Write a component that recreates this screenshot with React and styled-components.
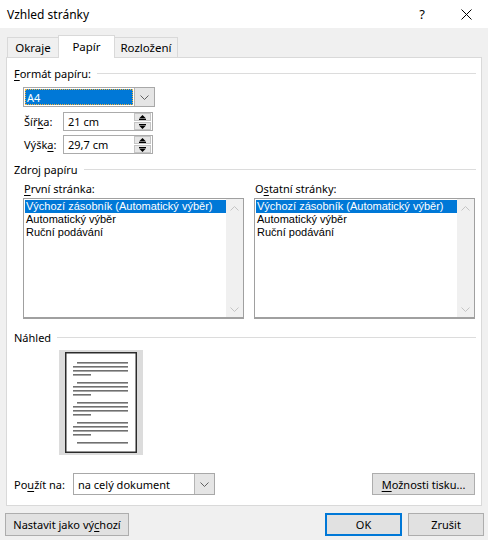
import React from 'react'
import styled, { createGlobalStyle } from 'styled-components'

const GlobalStyle = createGlobalStyle`
    html, body {
        margin: 0;
        padding: 0;
        background: #f0f0f0;
    }
    body {
        font-family: "Noto Sans", "Liberation Sans", sans-serif;
        font-size: 11px;
        line-height: 15px;
        color: #000;
    }
`

const Window = styled.div`
    width: 488px;
    height: 540px;
    background: #f0f0f0;
    display: flex;
    flex-direction: column;
    overflow: hidden;
`

const TitleBar = styled.div`
    height: 28px;
    flex-shrink: 0;
    background: #fff;
    display: flex;
    align-items: center;
    padding-left: 7px;
    font-size: 12px;
`

const Title = styled.div`
    flex: 1;
`

const TitleButton = styled.div`
    width: 44px;
    height: 28px;
    display: flex;
    align-items: center;
    justify-content: center;
    font-size: 13px;
`

const Body = styled.div`
    padding: 7px 6px 0 6px;
`

const TabStrip = styled.div`
    display: flex;
    align-items: flex-end;
    height: 22px;
    padding-left: 1px;
    position: relative;
    z-index: 1;
`

const Tab = styled.div`
    width: ${p => p.$w}px;
    height: ${p => (p.$active ? 23 : 20)}px;
    margin-bottom: ${p => (p.$active ? -1 : 0)}px;
    margin-right: -1px;
    box-sizing: border-box;
    border: 1px solid #d9d9d9;
    border-bottom: none;
    background: ${p => (p.$active ? '#fff' : '#f0f0f0')};
    display: flex;
    align-items: center;
    justify-content: center;
    padding-bottom: ${p => (p.$active ? 2 : 0)}px;
    font-size: 11.5px;
`

const Panel = styled.div`
    height: 449px;
    box-sizing: border-box;
    background: #fff;
    border: 1px solid #d9d9d9;
    padding: 8px 5px 0 7px;
    display: flex;
    flex-direction: column;
`

const GroupTitle = styled.div`
    display: flex;
    align-items: center;
    gap: 6px;
    height: 15px;
    margin-top: ${p => p.$mt || 0}px;

    &::after {
        content: "";
        flex: 1;
        height: 1px;
        background: #dcdcdc;
    }
`

const U = styled.span`
    text-decoration: underline;
    text-underline-offset: 2px;
`

const Indent = styled.div`
    padding-left: 9px;
    display: flex;
    flex-direction: column;
`

const Combo = styled.div`
    display: flex;
    width: ${p => p.$w}px;
    height: ${p => p.$h}px;
    box-sizing: border-box;
    border: 1px solid #a8a8a8;
    background: #fff;
    margin-top: ${p => p.$mt || 0}px;
`

const ComboValue = styled.div`
    flex: 1;
    display: flex;
    align-items: center;
    padding-left: 4px;
`

const ComboSelected = styled.div`
    flex: 1;
    margin: 1px;
    padding-left: 1px;
    display: flex;
    align-items: center;
    background: #0078d7;
    color: #fff;
    border: 1px dotted #f2b33d;
`

const ComboButton = styled.div`
    width: 19px;
    background: #e5e5e5;
    border-left: 1px solid #b4b4b4;
    display: flex;
    align-items: center;
    justify-content: center;
`

const SizeRow = styled.div`
    display: flex;
    align-items: center;
    margin-top: ${p => p.$mt}px;
    padding-left: 1px;
`

const SizeLabel = styled.div`
    width: 39px;
`

const Spin = styled.div`
    width: 90px;
    height: 19px;
    box-sizing: border-box;
    border: 1px solid #ababab;
    display: flex;
    align-items: center;
    padding-left: 4px;
`

const SpinValue = styled.div`
    flex: 1;
`

const SpinButtons = styled.div`
    display: flex;
    flex-direction: column;
    gap: 1px;
    margin-right: 1px;
`

const SpinButton = styled.div`
    width: 15px;
    height: 6px;
    background: #e6e6e6;
    border: 1px solid #c4c4c4;
    box-sizing: content-box;
    display: flex;
    align-items: center;
    justify-content: center;
`

const Columns = styled.div`
    display: grid;
    grid-template-columns: 221px 221px;
    column-gap: 10px;
    padding-left: 9px;
    margin-top: 4px;
`

const Column = styled.div`
    display: flex;
    flex-direction: column;
`

const ColumnLabel = styled.div`
    height: 15px;
    padding-left: 1px;
`

const ListBox = styled.div`
    margin-top: 2px;
    height: 121px;
    box-sizing: border-box;
    border: 1px solid #a0a0a0;
    border-bottom-width: 2px;
    display: flex;
`

const ListItems = styled.div`
    flex: 1;
    padding: 1px 0 0 1px;
`

const ListItem = styled.div`
    font-family: "Liberation Sans", Arial, sans-serif;
    font-size: 11px;
    line-height: 13px;
    height: 13px;
    padding-left: 1px;
    white-space: nowrap;
    background: ${p => (p.$selected ? '#0078d7' : 'transparent')};
    color: ${p => (p.$selected ? '#fff' : '#000')};
`

const ScrollTrack = styled.div`
    width: 17px;
    background: #f0f0f0;
    display: flex;
    flex-direction: column;
    justify-content: space-between;
    align-items: center;
    padding: 7px 0 5px;
`

const Preview = styled.div`
    margin: 5px 0 0 45px;
    width: 84px;
    height: 105px;
    background: #dcdcdc;
    padding: 2px 0 0 6px;
    box-sizing: border-box;
`

const ApplyRow = styled.div`
    display: flex;
    align-items: center;
    margin-top: 18px;
    padding-right: 1px;
`

const ApplyLabel = styled.div`
    width: 59px;
`

const Button = styled.div`
    height: ${p => p.$h || 23}px;
    width: ${p => p.$w}px;
    box-sizing: border-box;
    background: #e1e1e1;
    border: ${p => (p.$primary ? '2px solid #0078d7' : '1px solid #adadad')};
    display: flex;
    align-items: center;
    justify-content: center;
    margin-left: ${p => (p.$push ? 'auto' : '0')};
`

const Footer = styled.div`
    display: flex;
    gap: 6px;
    padding: 7px 4px 0 5px;
`

const Chevron = ({ color = '#606060' }) => (
    <svg width="9" height="5" viewBox="0 0 9 5">
        <path d="M0.5 0.5 L4.5 4.5 L8.5 0.5" stroke={color} fill="none" />
    </svg>
)

const ChevronUp = () => (
    <svg width="9" height="5" viewBox="0 0 9 5">
        <path d="M0.5 4.5 L4.5 0.5 L8.5 4.5" stroke="#c4c4c4" fill="none" />
    </svg>
)

const Triangle = ({ up }) => (
    <svg width="7" height="5" viewBox="0 0 7 5">
        {up ? (
            <>
                <path d="M3.5 0 L7 3.5 L0 3.5 Z" fill="#000" />
                <rect x="0" y="4" width="7" height="1" fill="#000" />
            </>
        ) : (
            <>
                <rect x="0" y="0" width="7" height="1" fill="#000" />
                <path d="M0 1.5 L7 1.5 L3.5 5 Z" fill="#000" />
            </>
        )}
    </svg>
)

const Close = () => (
    <svg width="11" height="11" viewBox="0 0 11 11">
        <path d="M0.5 0.5 L10.5 10.5 M10.5 0.5 L0.5 10.5" stroke="#000" strokeWidth="1" />
    </svg>
)

// page thumbnail: four paragraphs of four lines and one trailing line
const PageThumb = () => {
    const lines = []
    for (let g = 0; g < 4; g++) {
        const y = 10 + g * 20
        lines.push(<rect key={g + 'a'} x="12" y={y} width="51" height="1.6" />)
        lines.push(<rect key={g + 'b'} x="8" y={y + 4} width="55" height="1.6" />)
        lines.push(<rect key={g + 'c'} x="8" y={y + 8} width="55" height="1.6" />)
        lines.push(<rect key={g + 'd'} x="8" y={y + 12} width="18" height="1.6" />)
    }
    lines.push(<rect key="last" x="12" y="90" width="51" height="1.6" />)
    return (
        <svg width="72" height="101" viewBox="0 0 72 101">
            <rect x="0.75" y="0.75" width="70.5" height="99.5" fill="#fff" stroke="#2b2b2b" strokeWidth="1.5" />
            <g fill="#707070">{lines}</g>
        </svg>
    )
}

const sources = ['Výchozí zásobník (Automatický výběr)', 'Automatický výběr', 'Ruční podávání']

const SourceList = () => (
    <ListBox>
        <ListItems>
            {sources.map((s, i) => (
                <ListItem key={s} $selected={i === 0}>{s}</ListItem>
            ))}
        </ListItems>
        <ScrollTrack>
            <ChevronUp />
            <Chevron color="#c4c4c4" />
        </ScrollTrack>
    </ListBox>
)

const App = () => {
    return (
        <Window>
            <GlobalStyle />
            <TitleBar>
                <Title>Vzhled stránky</Title>
                <TitleButton>?</TitleButton>
                <TitleButton><Close /></TitleButton>
            </TitleBar>
            <Body>
                <TabStrip>
                    <Tab $w={52}>Okraje</Tab>
                    <Tab $w={57} $active>Papír</Tab>
                    <Tab $w={64}>Rozložení</Tab>
                </TabStrip>
                <Panel>
                    <GroupTitle><span><U>F</U>ormát papíru:</span></GroupTitle>
                    <Indent>
                        <Combo $w={132} $h={20} $mt={6}>
                            <ComboSelected>A4</ComboSelected>
                            <ComboButton><Chevron /></ComboButton>
                        </Combo>
                        <SizeRow $mt={5}>
                            <SizeLabel>Šíř<U>k</U>a:</SizeLabel>
                            <Spin>
                                <SpinValue>21 cm</SpinValue>
                                <SpinButtons>
                                    <SpinButton><Triangle up /></SpinButton>
                                    <SpinButton><Triangle /></SpinButton>
                                </SpinButtons>
                            </Spin>
                        </SizeRow>
                        <SizeRow $mt={4}>
                            <SizeLabel>Výšk<U>a</U>:</SizeLabel>
                            <Spin>
                                <SpinValue>29,7 cm</SpinValue>
                                <SpinButtons>
                                    <SpinButton><Triangle up /></SpinButton>
                                    <SpinButton><Triangle /></SpinButton>
                                </SpinButtons>
                            </Spin>
                        </SizeRow>
                    </Indent>

                    <GroupTitle $mt={8}><span>Zdroj papíru</span></GroupTitle>
                    <Columns>
                        <Column>
                            <ColumnLabel><U>P</U>rvní stránka:</ColumnLabel>
                            <SourceList />
                        </Column>
                        <Column>
                            <ColumnLabel>O<U>s</U>tatní stránky:</ColumnLabel>
                            <SourceList />
                        </Column>
                    </Columns>

                    <GroupTitle $mt={11}><span>Náhled</span></GroupTitle>
                    <Preview><PageThumb /></Preview>

                    <ApplyRow>
                        <ApplyLabel>Po<U>u</U>žít na:</ApplyLabel>
                        <Combo $w={142} $h={22}>
                            <ComboValue>na celý dokument</ComboValue>
                            <ComboButton><Chevron /></ComboButton>
                        </Combo>
                        <Button $w={103} $h={22} $push><span><U>M</U>ožnosti tisku...</span></Button>
                    </ApplyRow>
                </Panel>
            </Body>
            <Footer>
                <Button $w={124}><span>Nastavit jako vý<U>c</U>hozí</span></Button>
                <Button $w={77} $primary $push>OK</Button>
                <Button $w={76}>Zrušit</Button>
            </Footer>
        </Window>
    )
}

export default App
